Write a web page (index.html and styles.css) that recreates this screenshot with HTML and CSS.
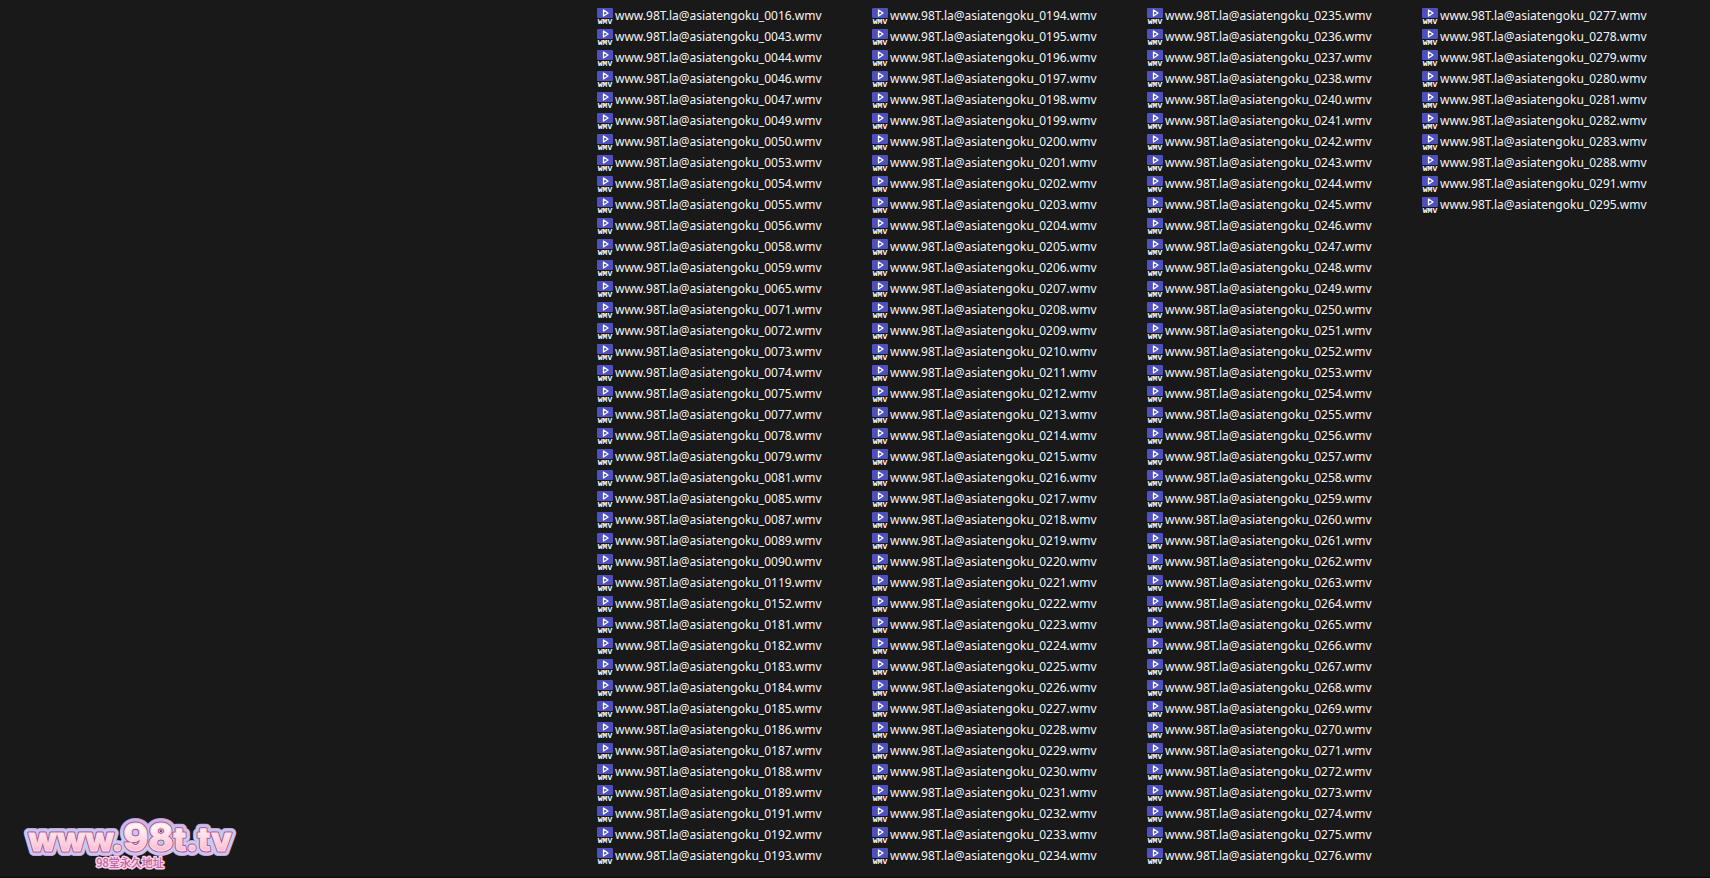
FILE: index.html
```
<!DOCTYPE html>
<html lang="en">
<head>
  <meta charset="UTF-8" />
  <meta name="viewport" content="width=device-width, initial-scale=1" />
  <title>File list</title>
  <link rel="stylesheet" href="styles.css">
</head>
<body>

  <div class="page">
    <aside class="side">
      <svg class="logo" viewBox="0 0 220 54" role="img" aria-label="www.98t.tv">
        <defs>
          <linearGradient id="pink" x1="0" y1="0" x2="0" y2="1">
            <stop offset="0.3" stop-color="#fff2f5" />
            <stop offset="0.9" stop-color="#ffb0cc" />
          </linearGradient>
          <linearGradient id="edge" x1="0" y1="0" x2="0" y2="1">
            <stop offset="0" stop-color="#cfa6dc" />
            <stop offset="0.5" stop-color="#c3cff2" />
            <stop offset="1" stop-color="#d3c0ec" />
          </linearGradient>
          <text id="name" class="logo-name" x="109" y="34" text-anchor="middle">www.<tspan class="logo-number">98</tspan>t.tv</text>
        </defs>
        <use href="#name" class="logo-rim" />
        <use href="#name" class="logo-edge" />
        <use href="#name" class="logo-line" />
        <use href="#name" class="logo-face" />
        <text class="logo-note" x="109" y="50" text-anchor="middle">98堂永久地址</text>
      </svg>
    </aside>

    <ul class="files" id="files"></ul>
  </div>

  <script>
    // single numbers and [from, to] runs
    const numbers = [
      16, 43, 44, 46, 47, 49, 50, [53, 56], 58, 59, 65, [71, 75], [77, 79],
      81, 85, 87, 89, 90, 119, 152, [181, 189], [191, 238], [240, 283],
      288, 291, 295
    ];

    const icon = `
      <svg class="file-icon" viewBox="0 0 16 16" aria-hidden="true">
        <rect width="16" height="10" rx="1" fill="#4e51bd" />
        <path d="M6.5 2v6L11 5z" fill="none" stroke="#fff" stroke-width="1.3" stroke-linejoin="round" />
        <text class="icon-label" x="8" y="16" text-anchor="middle">WMV</text>
      </svg>`;

    const list = document.getElementById("files");

    function addFile(n) {
      const item = document.createElement("li");
      const name = `www.98T.la@asiatengoku_${String(n).padStart(4, "0")}.wmv`;
      item.className = "file";
      item.innerHTML = `${icon}<span class="file-name">${name}</span>`;
      list.appendChild(item);
    }

    numbers.forEach(entry => {
      const [from, to] = Array.isArray(entry) ? entry : [entry, entry];
      for (let n = from; n <= to; n++) addFile(n);
    });
  </script>

</body>
</html>
```
FILE: styles.css
```
* {
  box-sizing: border-box;
}

body {
  margin: 0;
  background: #191919;
  color: #f4f4f4;
  font-family: "Noto Sans", "Open Sans", sans-serif;
  font-size: 12px;
  line-height: 16px;
}

.page {
  display: flex;
  min-height: 100vh;
  border-bottom: 1px solid #0c0c0c;
}

/* Left side */
.side {
  flex: 1;
  display: flex;
  align-items: flex-end;
  padding: 0 0 6px 21px;
}

.logo {
  width: 220px;
  height: 54px;
  overflow: visible;
}

.logo-name {
  font-family: Inter, sans-serif;
  font-size: 33px;
  font-weight: 800;
  stroke-linejoin: round;
}

.logo-number {
  font-size: 38px;
}

.logo-rim {
  fill: none;
  stroke: #b48acb;
  stroke-width: 10px;
}

.logo-edge {
  fill: none;
  stroke: url(#edge);
  stroke-width: 9px;
}

.logo-line {
  fill: none;
  stroke: #a8588f;
  stroke-width: 3px;
}

.logo-face {
  fill: url(#pink);
  stroke: #ffd9e4;
  stroke-width: 1px;
}

.logo-note {
  font-family: "Noto Sans CJK SC", sans-serif;
  font-size: 11px;
  font-weight: 500;
  fill: #b865a0;
  stroke: #ffcfe8;
  stroke-width: 3px;
  stroke-linejoin: round;
  paint-order: stroke;
}

/* Files run down each column, then over to the next */
.files {
  display: grid;
  grid-template-rows: repeat(41, 16px);
  grid-auto-flow: column;
  grid-auto-columns: 275px;
  row-gap: 5px;
  margin: 0;
  padding: 8px 13px 0 0;
  list-style: none;
}

.file {
  display: flex;
  align-items: center;
  gap: 2px;
  white-space: nowrap;
}

.file-icon {
  flex: none;
  width: 16px;
  height: 16px;
  overflow: visible;
}

.icon-label {
  font-family: "Liberation Mono", monospace;
  font-size: 8px;
  font-weight: 700;
  fill: #fff;
}
```
